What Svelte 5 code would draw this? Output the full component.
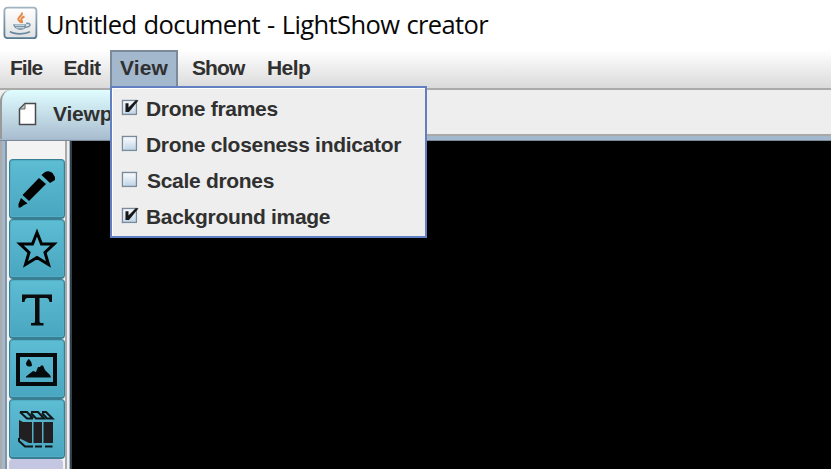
<script>
  const menus = [
    { label: 'File', width: 53, pad: 10, spacing: -1 },
    { label: 'Edit', width: 57, pad: 10.5, spacing: -0.7 },
    { label: 'View', width: 68, pad: 10, spacing: 0.1, active: true },
    { label: 'Show', width: 77, pad: 14, spacing: -0.9 },
    { label: 'Help', width: 60, pad: 12, spacing: -0.6 }
  ];
  let items = $state([
    { label: 'Drone frames', checked: true },
    { label: 'Drone closeness indicator', checked: false },
    { label: 'Scale drones', checked: false },
    { label: 'Background image', checked: true }
  ]);
  const tools = ['pencil', 'star', 'text', 'image', 'books'];
</script>

<div class="window">
  <header class="titlebar">
    <svg class="java" width="36" height="36" viewBox="0 0 36 36">
      <defs>
        <linearGradient id="jb" x1="0" y1="0" x2="0" y2="1"><stop offset="0" stop-color="#fff" /><stop offset=".5" stop-color="#f1f1f1" /><stop offset="1" stop-color="#dedfe1" /></linearGradient>
        <linearGradient id="je" x1="0" y1="0" x2="0" y2="1"><stop offset="0" stop-color="#a1b4c0" /><stop offset="1" stop-color="#547a94" /></linearGradient>
      </defs>
      <rect x="1.4" y="1.6" width="32" height="30.6" rx="3" fill="url(#jb)" stroke="url(#je)" stroke-width="1.8" />
      <path d="M19 6.5C20 10 14 11 15.5 14L18 16.5M21.5 10.5C17.5 12 17.8 14 19 15.2V17" fill="none" stroke="#e68a45" stroke-width="2" />
      <path d="M10 18.2H23C24 21 22 23.5 17.5 24C13 23.5 10.5 21 10 18.2Z" fill="#7997ab" />
      <path d="M12 19.3H21.5M13 21.8H21" stroke="#dbe3e7" stroke-width="1.1" />
      <path d="M23 17.5C29 16.5 28 21 22 21.5" fill="none" stroke="#7895a9" stroke-width="1.6" />
      <path d="M7 25.5C11 28.5 22 28.5 27 25.8" fill="none" stroke="#6788a0" stroke-width="1.8" />
    </svg>
    <h1>Untitled document - LightShow creator</h1>
  </header>

  <nav class="menubar">
    {#each menus as menu}
      <div class="menu" class:active={menu.active} style="width:{menu.width}px;padding-left:{menu.active ? menu.pad - 2 : menu.pad}px;letter-spacing:{menu.spacing}px">{menu.label}</div>
    {/each}
  </nav>

  <main class="workspace">
    <div class="tabs">
      <div class="tab">
        <svg width="20" height="26" viewBox="0 0 20 26"><path d="M7 3.5H17.5V24.5H1.5V9Z" fill="#fff" stroke="#484a4c" stroke-width="1.5" /><path d="M7 4V9H2Z" fill="#c6c6c6" stroke="#666" stroke-width="1" /></svg>
        <span>Viewport</span>
      </div>
    </div>
    <div class="content">
      <aside class="toolbar">
        {#each tools as tool}
          <button class="tool" aria-label={tool}>
            <svg width="54" height="60" viewBox="0 0 54 60">
              {#if tool === 'pencil'}
                <path d="M13.5 40L30 23L37 29L20 46Z" fill="#000" />
                <path d="M32.5 20L36 17Q40 15 43.5 18Q46.5 21.5 46 25L41 28Z" fill="#000" />
                <path d="M12 43L18.5 48.5L15 50L11.5 52.5H9.5V49Z" fill="#000" />
              {:else if tool === 'star'}
                <path d="M28 17.5L32.5 29H45L36 37.5L39.5 49.5L28 42.5L16.5 49.5L20 37.5L11 29H23.5Z" fill="none" stroke="#000" stroke-width="3" />
              {:else if tool === 'text'}
                <path d="M13 19.5H43V27H40.5Q40 23 37.5 23H30.5V46.5Q30.5 48 32.5 48H34.5V50.5H22V48H24Q26 48 26 46.5V23H18.5Q16 23 15.5 27H13Z" fill="#090b0c" />
              {:else if tool === 'image'}
                <rect x="9" y="20" width="37" height="29" fill="none" stroke="#050a0d" stroke-width="4" />
                <path d="M17 41.5L24 36L27 37L29 32H31L32 30.5H34L36 35L41 40L42 42.5H17Z" fill="#050a0d" />
                <path d="M17 28Q19 24 20 24Q23 27 23 30Q23 31.5 20 31.5Q17 31.5 17 28Z" fill="#050a0d" />
              {:else}
                <g fill="#211f22">
                  <path d="M10 25L14 27H23V48H20L10 43Z" />
                  <path d="M24.5 27H33V48H24.5ZM34.5 27H44V48H34.5Z" />
                </g>
                <path d="M11 17L18 23.5H24M11 17H18L24 23.5M22 17H29L35 23.5H27L22 18M33 17H37L43.5 23.5H38L33 18M10 43V46L16 51.5H24M26 51.5H33M36 51.5H43.5" fill="none" stroke="#101719" stroke-width="2" />
              {/if}
            </svg>
          </button>
        {/each}
        <div class="next"></div>
      </aside>
      <div class="split"></div>
      <div class="canvas"></div>
    </div>
  </main>

  <div class="popup">
    {#each items as item}
      <div class="option">
        <svg width="18" height="20" viewBox="0 0 18 20">
          <defs><linearGradient id="cb" x1="0" y1="0" x2="0" y2="1"><stop offset="0" stop-color="#fff" /><stop offset="1" stop-color="#bcd2e7" /></linearGradient></defs>
          <rect x="2.2" y="4.2" width="14.8" height="14.8" fill="#fff" />
          <rect x="1.5" y="3.5" width="14" height="14" fill="url(#cb)" stroke="#7a8a99" stroke-width="1.4" />
          <path d="M2.9 16.1V4.9H14.1" fill="none" stroke="#e6edf4" />
          {#if item.checked}<path d="M4.5 6.3H7.5V10.5L14.7 3.3H17.6L8 15H4.5Z" fill="#171819" />{/if}
        </svg>
        <span class:inset={item.label === 'Scale drones'}>{item.label}</span>
      </div>
    {/each}
  </div>
</div>

<style>
  :global(body) { overflow: hidden; }
  .window { position: relative; width: 831px; height: 469px; overflow: hidden; background: #fff; display: flex; flex-direction: column; font-family: 'Liberation Sans', sans-serif; font-weight: 700; font-size: 21px; color: #303030; }
  .titlebar { height: 50px; flex: none; display: flex; box-sizing: border-box; padding: 6px 0 0 3px; }
  .java { flex: none; }
  h1 { margin: 0 0 0 7px; font: 400 25.5px/37px 'Open Sans', sans-serif; color: #080808; white-space: nowrap; letter-spacing: -0.6px; word-spacing: 1px; }
  .menubar { height: 38px; flex: none; display: flex; background: linear-gradient(#fff, #dadada); }
  .menu { box-sizing: border-box; height: 37px; line-height: 35px; white-space: nowrap; }
  .active { background: #a3b8cc; border: 2px solid #7a8a99; border-bottom: 0; line-height: 31px; }
  .workspace { flex: 1; display: flex; flex-direction: column; background: #eee; }
  .tabs { height: 53px; box-sizing: border-box; border-top: 2px solid #aaa; background: linear-gradient(#eee 44px, #a9a9a9 44px 46px, #a3b8cc 46px 50px, #7a8a99 50px); }
  .tab { box-sizing: border-box; width: 180px; height: 49px; padding: 10px 0 0 16px; display: flex; gap: 15px; border-left: 2px solid #999; border-top-left-radius: 11px; background: linear-gradient(#e0fdff, #a9bdd0); }
  .tab span { line-height: 28px; letter-spacing: -0.2px; }
  .content { flex: 1; display: flex; border-left: 2px solid #aaa; background: #a3b8cc; padding-left: 3px; }
  .toolbar { width: 60px; height: 328px; box-sizing: border-box; background: #f3f3f3; border-left: 2px solid #8295a5; padding: 18px 2px 0; overflow: hidden; }
  .tool { display: block; box-sizing: border-box; width: 56px; height: 60px; padding: 0; border: 1px solid #397f93; border-width: 1px 1px 2px; border-radius: 4px; background: linear-gradient(#5dbdd3, #49a6c0); box-shadow: inset 0 0 0 1px #51aec4; overflow: hidden; }
  .tool svg { display: block; margin-top: -8px; margin-left: -1px; }
  .next { height: 30px; border-radius: 4px 4px 0 0; background: #c4c6e2; }
  .split { width: 7px; background: linear-gradient(90deg, #a9a9aa 0 2px, #eee 2px 4px, #a3b8cc 4px 5px, #33404a 5px); }
  .canvas { flex: 1; background: #000; }
  .popup { position: absolute; left: 110px; top: 86px; width: 317px; height: 152px; box-sizing: border-box; border: 2px solid #6280c1; background: #eee; padding: 3px 0 0 9px; box-shadow: inset 1px 1px #fff; }
  .option { height: 36px; display: flex; gap: 7px; }
  .option svg { margin-top: 6px; }
  .option span { line-height: 35px; white-space: nowrap; letter-spacing: -0.3px; }
  .option .inset { padding-left: 1px; }
</style>
